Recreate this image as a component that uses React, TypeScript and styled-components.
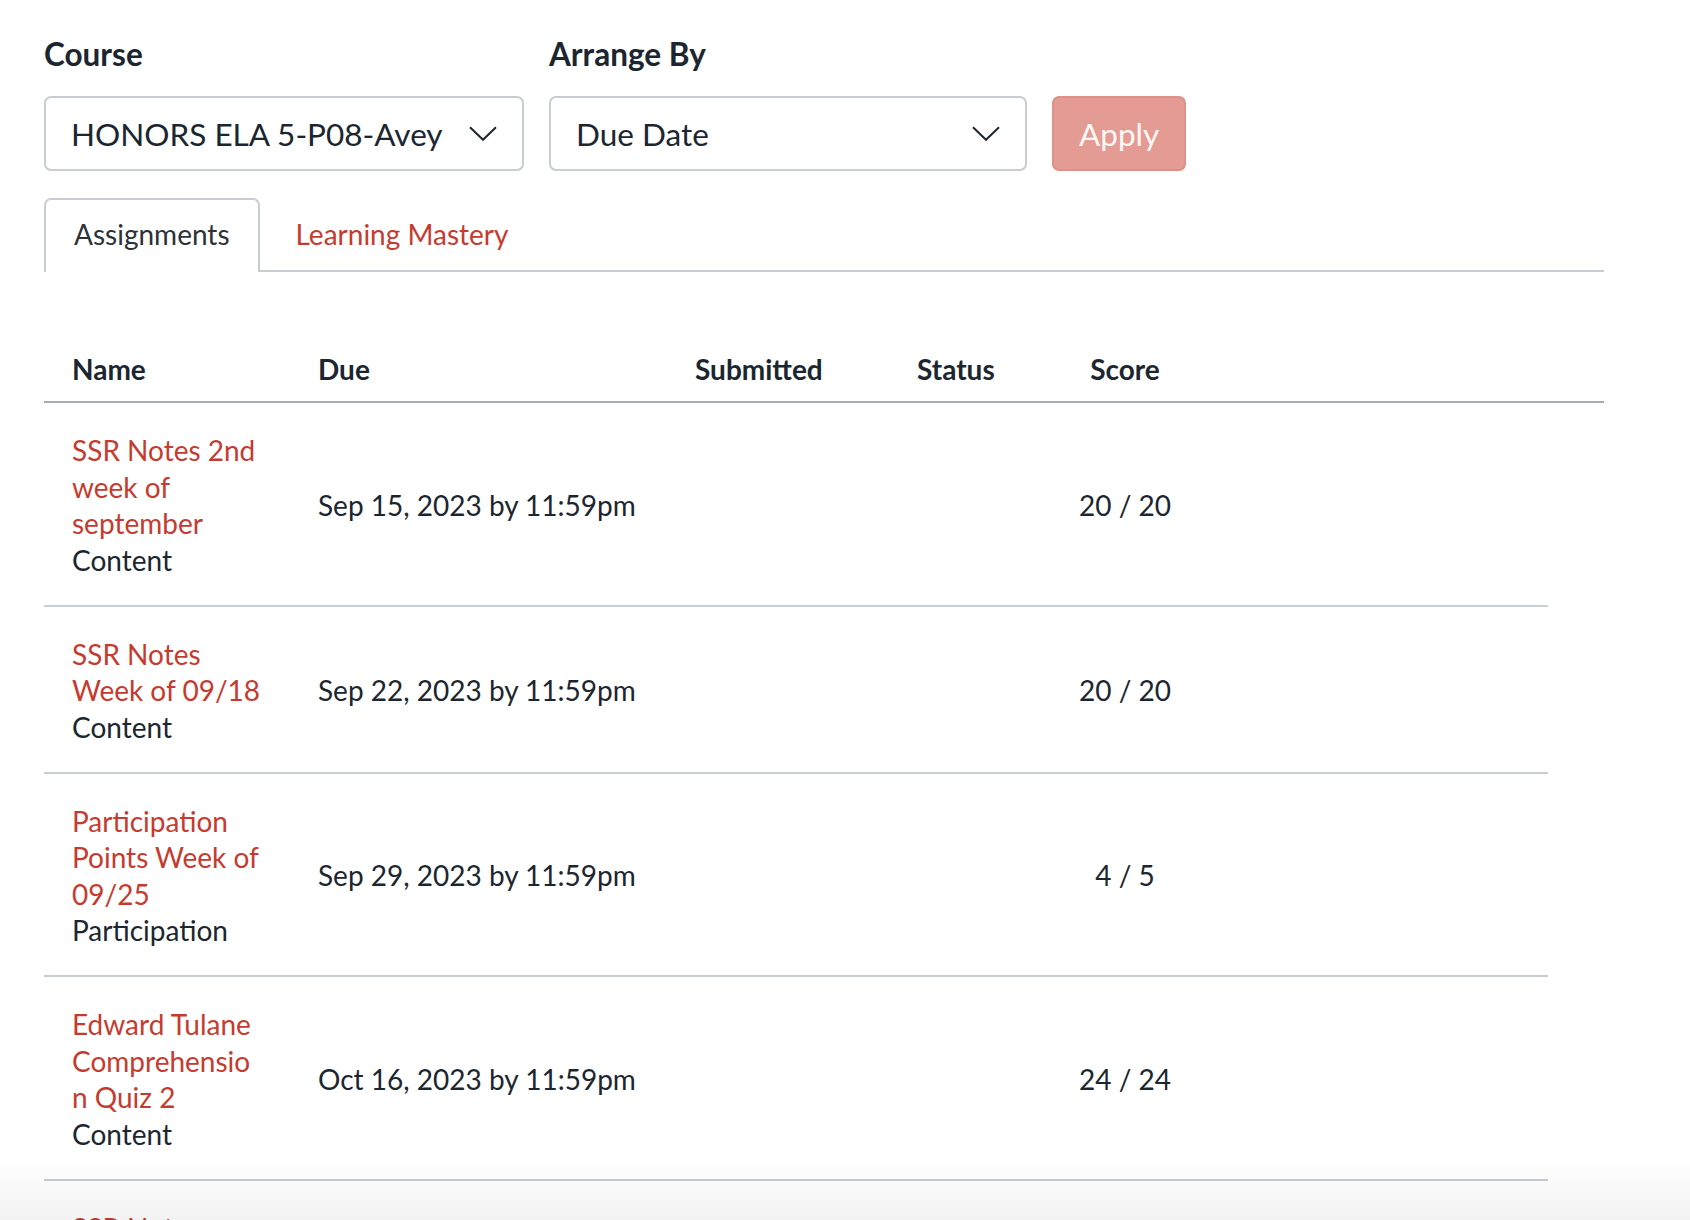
import React from "react";
import styled, { createGlobalStyle } from "styled-components";

const GlobalStyle = createGlobalStyle`
  html, body {
    margin: 0;
    padding: 0;
    background: #ffffff;
  }
  body {
    font-family: Lato, "Liberation Sans", Arial, sans-serif;
    color: #1f2a33;
  }
  * { box-sizing: border-box; }
`;

const Page = styled.div`
  padding: 34px 0 0 44px;
  width: 1690px;
`;

const Filters = styled.div`
  display: flex;
  align-items: flex-end;
  gap: 25px;
`;

const Field = styled.div`
  display: flex;
  flex-direction: column;
  gap: 22px;
`;

const Label = styled.label`
  font-size: 31.5px;
  font-weight: 700;
  line-height: 40px;
  color: #1c2630;
`;

const Select = styled.div<{ $w: number }>`
  width: ${(p) => p.$w}px;
  height: 75px;
  border: 2px solid #c7cdd1;
  border-radius: 7px;
  background: #fff;
  display: flex;
  align-items: center;
  justify-content: space-between;
  padding: 0 25px 0 25px;
  gap: 20px;
  overflow: hidden;
`;

const SelectValue = styled.span`
  font-size: 31.5px;
  line-height: 40px;
  color: #1c2630;
  white-space: nowrap;
  overflow: hidden;
  flex: 1;
`;

const ApplyButton = styled.button`
  height: 75px;
  padding: 0 25px;
  border: 2px solid #dd918a;
  border-radius: 7px;
  background: #e39b93;
  color: #fff8f6;
  font-family: Lato, "Liberation Sans", Arial, sans-serif;
  font-size: 31.5px;
  line-height: 40px;
`;

const TabList = styled.div`
  margin-top: 27px;
  width: 1560px;
  display: flex;
  gap: 6px;
  border-bottom: 2px solid #c7cdd1;
`;

const Tab = styled.div<{ $active?: boolean }>`
  padding: 16px 28px 17px;
  font-size: 28px;
  line-height: 36.5px;
  border: 2px solid ${(p) => (p.$active ? "#c7cdd1" : "transparent")};
  border-bottom: none;
  border-radius: 7px 7px 0 0;
  background: ${(p) => (p.$active ? "#fff" : "transparent")};
  margin-bottom: ${(p) => (p.$active ? "-2px" : "0")};
  padding-bottom: ${(p) => (p.$active ? "19px" : "17px")};
  color: ${(p) => (p.$active ? "#2d3237" : "#c63b2f")};
`;

const Table = styled.div`
  margin-top: 63px;
`;

const cols = "274px 377px 222px 135px 146px";

const HeaderRow = styled.div`
  display: grid;
  grid-template-columns: ${cols};
  width: 1560px;
  padding: 16px 0 14px;
  border-bottom: 2px solid #a5acb2;
`;

const HeadCell = styled.div<{ $center?: boolean; $first?: boolean }>`
  font-size: 28px;
  font-weight: 700;
  line-height: 36.5px;
  color: #1c2630;
  padding-left: ${(p) => (p.$first ? "28px" : "0")};
  text-align: ${(p) => (p.$center ? "center" : "left")};
`;

const Row = styled.div`
  display: grid;
  grid-template-columns: ${cols};
  align-items: center;
  width: 1504px;
  padding: 29px 0 26.5px;
  border-bottom: 2px solid #c7cdd1;
`;

const NameCell = styled.div`
  padding-left: 28px;
  width: 219px;
  font-size: 28px;
  line-height: 36.5px;
  overflow-wrap: anywhere;
`;

const NameLink = styled.a`
  display: block;
  color: #c63b2f;
  text-decoration: none;
`;

const Category = styled.div`
  color: #1c2630;
`;

const Cell = styled.div<{ $center?: boolean }>`
  font-size: 28px;
  line-height: 36.5px;
  color: #1c2630;
  text-align: ${(p) => (p.$center ? "center" : "left")};
  white-space: nowrap;
`;

const BottomShade = styled.div`
  position: fixed;
  left: 0;
  right: 0;
  bottom: 0;
  height: 60px;
  pointer-events: none;
  background: linear-gradient(rgba(0, 0, 0, 0), rgba(0, 0, 0, 0.05));
`;

const Chevron = () => (
  <svg width="28" height="15" viewBox="0 0 28 15" fill="none">
    <path d="M1 1.2 L14 13.8 L27 1.2" stroke="#1c2630" strokeWidth="2" strokeLinejoin="miter" />
  </svg>
);

type Assignment = {
  name: string;
  category: string;
  due: string;
  score: string;
};

const assignments: Assignment[] = [
  { name: "SSR Notes 2nd week of september", category: "Content", due: "Sep 15, 2023 by 11:59pm", score: "20 / 20" },
  { name: "SSR Notes Week of 09/18", category: "Content", due: "Sep 22, 2023 by 11:59pm", score: "20 / 20" },
  { name: "Participation Points Week of 09/25", category: "Participation", due: "Sep 29, 2023 by 11:59pm", score: "4 / 5" },
  { name: "Edward Tulane Comprehension Quiz 2", category: "Content", due: "Oct 16, 2023 by 11:59pm", score: "24 / 24" },
  { name: "SSR Notes Week of 10/16", category: "Content", due: "Oct 20, 2023 by 11:59pm", score: "20 / 20" },
];

export default function App() {
  return (
    <>
      <GlobalStyle />
      <Page>
        <Filters>
          <Field>
            <Label>Course</Label>
            <Select $w={480}>
              <SelectValue>HONORS ELA 5-P08-Avey</SelectValue>
              <Chevron />
            </Select>
          </Field>
          <Field>
            <Label>Arrange By</Label>
            <Select $w={478}>
              <SelectValue>Due Date</SelectValue>
              <Chevron />
            </Select>
          </Field>
          <ApplyButton disabled>Apply</ApplyButton>
        </Filters>

        <TabList>
          <Tab $active>Assignments</Tab>
          <Tab>Learning Mastery</Tab>
        </TabList>

        <Table>
          <HeaderRow>
            <HeadCell $first>Name</HeadCell>
            <HeadCell>Due</HeadCell>
            <HeadCell>Submitted</HeadCell>
            <HeadCell>Status</HeadCell>
            <HeadCell $center>Score</HeadCell>
          </HeaderRow>
          {assignments.map((a) => (
            <Row key={a.name}>
              <NameCell>
                <NameLink href="#">{a.name}</NameLink>
                <Category>{a.category}</Category>
              </NameCell>
              <Cell>{a.due}</Cell>
              <Cell />
              <Cell />
              <Cell $center>{a.score}</Cell>
            </Row>
          ))}
        </Table>
      </Page>
      <BottomShade />
    </>
  );
}
